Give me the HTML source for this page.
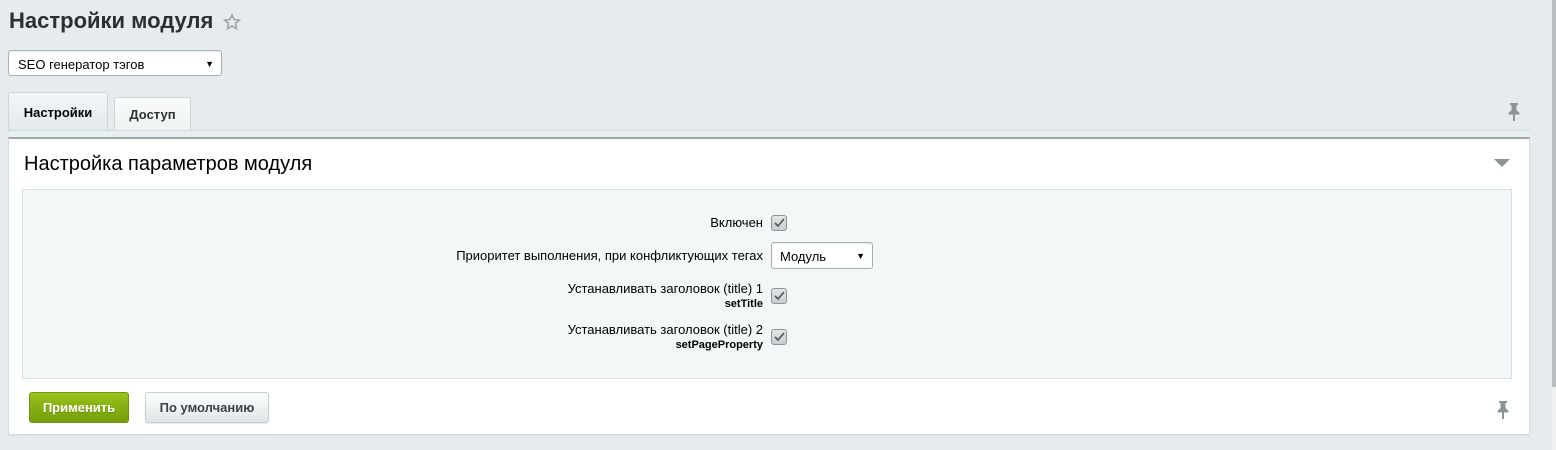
<!DOCTYPE html>
<html><head><meta charset="utf-8"><style>
*{box-sizing:border-box;margin:0;padding:0}
body{width:1556px;height:450px;background:#e6ecee;font-family:"Liberation Sans",Arial,sans-serif;position:relative;overflow:hidden;color:#000}
.abs{position:absolute}
h1{position:absolute;left:9px;top:8px;font-size:22px;font-weight:bold;color:#2a2f31;letter-spacing:0}
.sel{position:absolute;background:#fff;border:1px solid #a8b0b3;border-radius:3px;font-size:13px;box-shadow:inset 0 1px 1px rgba(0,0,0,.08)}
.sel .arr{position:absolute;right:7px;top:8px;font-size:9px}
.tab{position:absolute;border:1px solid #cdd5d8;border-bottom:none;border-radius:3px 3px 0 0;font-size:13px;font-weight:bold;color:#2d3133;text-align:center}
.panel{position:absolute;left:8px;top:130px;width:1522px;height:305px;background:#fff;border:1px solid #d5dcdf;border-top:none;box-shadow:0 1px 1px rgba(0,0,0,.05)}
.inner{position:absolute;left:13px;top:59px;width:1490px;height:190px;background:#f3f7f8;border:1px solid #d8e1e5}
.lbl{position:absolute;right:766px;font-size:13px;text-align:right;color:#000;line-height:14px}
.cb{position:absolute;width:16px;height:16px;border:1px solid #8d9597;border-radius:3px;background:linear-gradient(#e3e6e7,#c9cdcf)}
.cb svg{position:absolute;left:2px;top:2px}
.btn{position:absolute;height:31px;border-radius:3px;font-size:13px;font-weight:bold;text-align:center;line-height:30px}
</style></head><body>
<h1>Настройки модуля</h1>
<svg class="abs" style="left:223px;top:13px" width="18" height="18" viewBox="0 0 24 24"><path d="M12 2.5l2.9 6.3 6.8.7-5.1 4.6 1.5 6.7L12 17.3l-6.1 3.5 1.5-6.7-5.1-4.6 6.8-.7z" fill="none" stroke="#99a3a7" stroke-width="2"/></svg>
<div class="sel" style="left:8px;top:50px;width:214px;height:26px;padding:6px 0 0 9px">SEO генератор тэгов<span class="arr">▼</span></div>
<div class="tab" style="left:8px;top:92px;width:100px;height:39px;background:linear-gradient(#f3f6f7,#e2e9eb);line-height:40px;color:#000">Настройки</div>
<div class="tab" style="left:114px;top:97px;width:77px;height:34px;background:linear-gradient(#fbfcfc,#eef2f3);line-height:33px">Доступ</div>
<div class="abs" style="left:8px;top:130px;width:1522px;height:7px;background:#e8eff0;border-top:1px solid #d3dbde"></div>
<svg class="abs" style="left:1507px;top:103px" width="14" height="18" viewBox="0 0 14 18"><path d="M3 0h8v2H9.5v5l3 3v1.5H8V18H6v-6.5H1.5V10l3-3V2H3z" fill="#8c9496"/></svg>
<div class="panel" style="top:137px;height:298px;border-top:2px solid #9ea6a9">
<div class="abs" style="left:15px;top:14px;font-size:20px;color:#000">Настройка параметров модуля</div>
<svg class="abs" style="left:1485px;top:20px" width="18" height="10"><path d="M0 0h16l-8 8z" fill="#8d9597"/></svg>
<div class="inner" style="top:50px;height:190px"></div>
<div class="lbl" style="top:77px">Включен</div>
<div class="cb" style="left:762px;top:76px"><svg width="11" height="10"><path d="M1 5l3 3 6-7" fill="none" stroke="#4e5456" stroke-width="1.6"/></svg></div>
<div class="lbl" style="top:110px">Приоритет выполнения, при конфликтующих тегах</div>
<div class="sel" style="left:762px;top:103px;width:102px;height:27px;padding:6px 0 0 8px">Модуль<span class="arr" style="top:8px">▼</span></div>
<div class="lbl" style="top:143px">Устанавливать заголовок (title) 1<br><b style="font-size:11px">setTitle</b></div>
<div class="cb" style="left:762px;top:149px"><svg width="11" height="10"><path d="M1 5l3 3 6-7" fill="none" stroke="#4e5456" stroke-width="1.6"/></svg></div>
<div class="lbl" style="top:184px">Устанавливать заголовок (title) 2<br><b style="font-size:11px">setPageProperty</b></div>
<div class="cb" style="left:762px;top:190px"><svg width="11" height="10"><path d="M1 5l3 3 6-7" fill="none" stroke="#4e5456" stroke-width="1.6"/></svg></div>
<div class="btn" style="left:20px;top:253px;width:100px;background:linear-gradient(#98c21b,#739e0a);color:#fff;border:1px solid #6d9510;text-shadow:0 1px 0 rgba(0,0,0,.2)">Применить</div>
<div class="btn" style="left:136px;top:253px;width:124px;background:linear-gradient(#fdfefe,#dfe6e8);color:#3b4245;border:1px solid #c5ced1;box-shadow:0 1px 1px rgba(0,0,0,.1)">По умолчанию</div>
<svg class="abs" style="left:1487px;top:262px" width="14" height="18" viewBox="0 0 14 18"><path d="M3 0h8v2H9.5v5l3 3v1.5H8V18H6v-6.5H1.5V10l3-3V2H3z" fill="#8c9496"/></svg>
</div>
<div class="abs" style="left:1552px;top:0;width:4px;height:387px;background:#b8bdbf"></div>
<div class="abs" style="left:1552px;top:387px;width:4px;height:63px;background:#eef0f1"></div>
</body></html>
